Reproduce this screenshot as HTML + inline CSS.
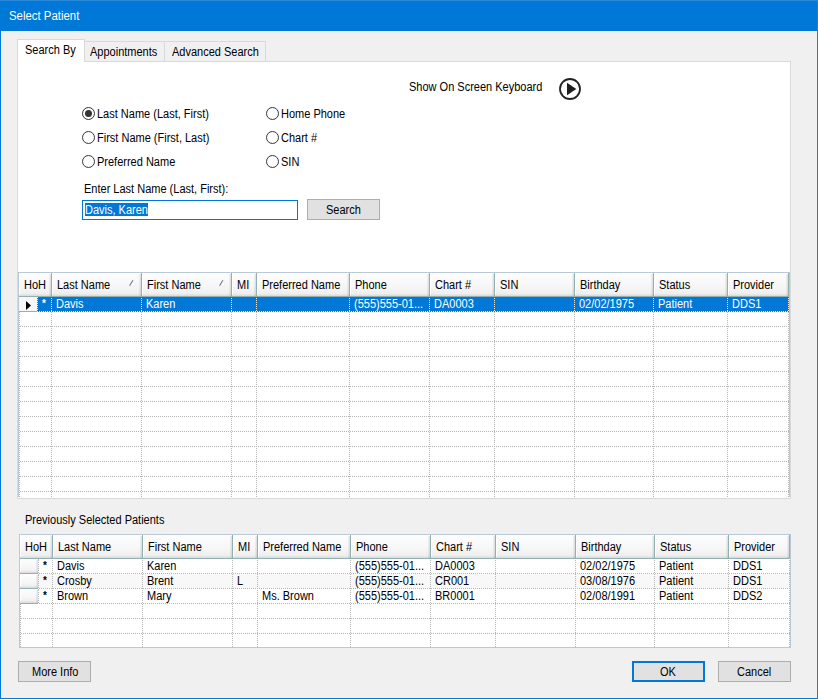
<!DOCTYPE html>
<html><head><meta charset="utf-8"><title>Select Patient</title>
<style>
html,body{margin:0;padding:0;}
body{width:818px;height:699px;position:relative;overflow:hidden;background:#f0f0f0;font-family:'Liberation Sans', sans-serif;}
.t{position:absolute;white-space:nowrap;line-height:13px;font-family:'Liberation Sans', sans-serif;transform-origin:0 0;}
svg{display:block}
</style></head><body>
<div style="position:absolute;left:0px;top:0px;width:818px;height:31px;background:#0078d7"></div>
<div style="position:absolute;left:0px;top:31px;width:1px;height:668px;background:#0078d7"></div>
<div style="position:absolute;left:817px;top:0px;width:1px;height:699px;background:#1a80d8"></div>
<div style="position:absolute;left:0px;top:0px;width:818px;height:1px;background:#2a87d9"></div>
<div style="position:absolute;left:0px;top:698px;width:818px;height:1px;background:#0078d7"></div>
<div class="t" style="left:9px;top:10px;color:#fff;font-size:12px;transform:scaleX(0.95);">Select Patient</div>
<div style="position:absolute;left:17px;top:61px;width:774px;height:438px;background:#fff;border:1px solid #d9d9d9;box-sizing:border-box"></div>
<div style="position:absolute;left:84px;top:41px;width:81px;height:21px;background:#f0f0f0;border:1px solid #d9d9d9;box-sizing:border-box"></div>
<div style="position:absolute;left:164px;top:41px;width:102px;height:21px;background:#f0f0f0;border:1px solid #d9d9d9;box-sizing:border-box"></div>
<div style="position:absolute;left:17px;top:39px;width:68px;height:23px;background:#fff;border:1px solid #d9d9d9;border-bottom:none;box-sizing:border-box"></div>
<div style="position:absolute;left:18px;top:61px;width:66px;height:1px;background:#fff"></div>
<div class="t" style="left:25px;top:44px;color:#000;font-size:12px;transform:scaleX(0.9167);">Search By</div>
<div class="t" style="left:90px;top:46px;color:#000;font-size:12px;transform:scaleX(0.9167);">Appointments</div>
<div class="t" style="left:172px;top:46px;color:#000;font-size:12px;transform:scaleX(0.9167);">Advanced Search</div>
<div class="t" style="left:409px;top:81px;color:#000;font-size:12px;transform:scaleX(0.9167);">Show On Screen Keyboard</div>
<svg style="position:absolute;left:558px;top:77px" width="24" height="24" viewBox="0 0 24 24">
<circle cx="12" cy="12" r="10" fill="none" stroke="#222" stroke-width="1.8"/>
<path d="M9 5.8 L18.3 12 L9 18.2 Z" fill="#1e1e1e"/></svg>
<svg style="position:absolute;left:82px;top:107px" width="13" height="13" viewBox="0 0 13 13"><circle cx="6.5" cy="6.5" r="6" fill="#fff" stroke="#333" stroke-width="1"/><circle cx="6.5" cy="6.5" r="3.5" fill="#333"/></svg>
<div class="t" style="left:97px;top:108px;color:#000;font-size:12px;transform:scaleX(0.9167);">Last Name (Last, First)</div>
<svg style="position:absolute;left:82px;top:131px" width="13" height="13" viewBox="0 0 13 13"><circle cx="6.5" cy="6.5" r="6" fill="#fff" stroke="#333" stroke-width="1"/></svg>
<div class="t" style="left:97px;top:132px;color:#000;font-size:12px;transform:scaleX(0.9167);">First Name (First, Last)</div>
<svg style="position:absolute;left:82px;top:155px" width="13" height="13" viewBox="0 0 13 13"><circle cx="6.5" cy="6.5" r="6" fill="#fff" stroke="#333" stroke-width="1"/></svg>
<div class="t" style="left:97px;top:156px;color:#000;font-size:12px;transform:scaleX(0.9167);">Preferred Name</div>
<svg style="position:absolute;left:266px;top:107px" width="13" height="13" viewBox="0 0 13 13"><circle cx="6.5" cy="6.5" r="6" fill="#fff" stroke="#333" stroke-width="1"/></svg>
<div class="t" style="left:281px;top:108px;color:#000;font-size:12px;transform:scaleX(0.9167);">Home Phone</div>
<svg style="position:absolute;left:266px;top:131px" width="13" height="13" viewBox="0 0 13 13"><circle cx="6.5" cy="6.5" r="6" fill="#fff" stroke="#333" stroke-width="1"/></svg>
<div class="t" style="left:281px;top:132px;color:#000;font-size:12px;transform:scaleX(0.9167);">Chart #</div>
<svg style="position:absolute;left:266px;top:155px" width="13" height="13" viewBox="0 0 13 13"><circle cx="6.5" cy="6.5" r="6" fill="#fff" stroke="#333" stroke-width="1"/></svg>
<div class="t" style="left:281px;top:156px;color:#000;font-size:12px;transform:scaleX(0.9167);">SIN</div>
<div class="t" style="left:84px;top:183px;color:#000;font-size:12px;transform:scaleX(0.9167);">Enter Last Name (Last, First):</div>
<div style="position:absolute;left:82px;top:200px;width:216px;height:20px;background:#fff;border:1px solid #0078d7;box-sizing:border-box"></div>
<div style="position:absolute;left:85px;top:203px;width:63px;height:13px;background:#0078d7"></div>
<div class="t" style="left:85px;top:204px;color:#fff;font-size:12px;transform:scaleX(0.9167);">Davis, Karen</div>
<div style="position:absolute;left:307px;top:199px;width:73px;height:21px;background:#e1e1e1;border:1px solid #adadad;box-sizing:border-box"></div>
<div class="t" style="left:326px;top:204px;color:#000;font-size:12px;transform:scaleX(0.9167);">Search</div>
<div style="position:absolute;left:18px;top:272px;width:772px;height:225px;background:#fff"></div>
<div style="position:absolute;left:18px;top:272px;width:772px;height:1px;background:#b9c9d8"></div>
<div style="position:absolute;left:18px;top:272px;width:1px;height:225px;background:#b9c9d8"></div>
<div style="position:absolute;left:789px;top:272px;width:1px;height:225px;background:#b9c9d8"></div>
<div style="position:absolute;left:19px;top:273px;width:32px;height:23px;background:linear-gradient(#fdfdfd,#f6f6f6 60%,#ececec)"></div>
<div style="position:absolute;left:19px;top:273px;width:1px;height:22px;background:#fff"></div>
<div style="position:absolute;left:49px;top:274px;width:2px;height:22px;background:linear-gradient(to right,rgba(0,0,0,0.03),rgba(0,0,0,0.12))"></div>
<div style="position:absolute;left:19px;top:294px;width:32px;height:2px;background:linear-gradient(rgba(0,0,0,0.02),rgba(0,0,0,0.08))"></div>
<div style="position:absolute;left:51px;top:273px;width:1px;height:23px;background:#92b0b0"></div>
<div class="t" style="left:24px;top:279px;color:#000;font-size:12px;transform:scaleX(0.9167);">HoH</div>
<div style="position:absolute;left:52px;top:273px;width:89px;height:23px;background:linear-gradient(#fdfdfd,#f6f6f6 60%,#ececec)"></div>
<div style="position:absolute;left:52px;top:273px;width:1px;height:22px;background:#fff"></div>
<div style="position:absolute;left:139px;top:274px;width:2px;height:22px;background:linear-gradient(to right,rgba(0,0,0,0.03),rgba(0,0,0,0.12))"></div>
<div style="position:absolute;left:52px;top:294px;width:89px;height:2px;background:linear-gradient(rgba(0,0,0,0.02),rgba(0,0,0,0.08))"></div>
<div style="position:absolute;left:141px;top:273px;width:1px;height:23px;background:#92b0b0"></div>
<div class="t" style="left:57px;top:279px;color:#000;font-size:12px;transform:scaleX(0.9167);">Last Name</div>
<svg style="position:absolute;left:128px;top:279px" width="10" height="8" viewBox="0 0 10 8"><path d="M1.5 7 L5 1 L8.5 7 Z" fill="#fbfbfb" stroke="#f0f0f0" stroke-width="1"/><path d="M1.6 6.8 L4.9 1.2" stroke="#7a7a7a" stroke-width="1.1"/></svg>
<div style="position:absolute;left:142px;top:273px;width:89px;height:23px;background:linear-gradient(#fdfdfd,#f6f6f6 60%,#ececec)"></div>
<div style="position:absolute;left:142px;top:273px;width:1px;height:22px;background:#fff"></div>
<div style="position:absolute;left:229px;top:274px;width:2px;height:22px;background:linear-gradient(to right,rgba(0,0,0,0.03),rgba(0,0,0,0.12))"></div>
<div style="position:absolute;left:142px;top:294px;width:89px;height:2px;background:linear-gradient(rgba(0,0,0,0.02),rgba(0,0,0,0.08))"></div>
<div style="position:absolute;left:231px;top:273px;width:1px;height:23px;background:#92b0b0"></div>
<div class="t" style="left:147px;top:279px;color:#000;font-size:12px;transform:scaleX(0.9167);">First Name</div>
<svg style="position:absolute;left:218px;top:279px" width="10" height="8" viewBox="0 0 10 8"><path d="M1.5 7 L5 1 L8.5 7 Z" fill="#fbfbfb" stroke="#f0f0f0" stroke-width="1"/><path d="M1.6 6.8 L4.9 1.2" stroke="#7a7a7a" stroke-width="1.1"/></svg>
<div style="position:absolute;left:232px;top:273px;width:24px;height:23px;background:linear-gradient(#fdfdfd,#f6f6f6 60%,#ececec)"></div>
<div style="position:absolute;left:232px;top:273px;width:1px;height:22px;background:#fff"></div>
<div style="position:absolute;left:254px;top:274px;width:2px;height:22px;background:linear-gradient(to right,rgba(0,0,0,0.03),rgba(0,0,0,0.12))"></div>
<div style="position:absolute;left:232px;top:294px;width:24px;height:2px;background:linear-gradient(rgba(0,0,0,0.02),rgba(0,0,0,0.08))"></div>
<div style="position:absolute;left:256px;top:273px;width:1px;height:23px;background:#92b0b0"></div>
<div class="t" style="left:237px;top:279px;color:#000;font-size:12px;transform:scaleX(0.9167);">MI</div>
<div style="position:absolute;left:257px;top:273px;width:92px;height:23px;background:linear-gradient(#fdfdfd,#f6f6f6 60%,#ececec)"></div>
<div style="position:absolute;left:257px;top:273px;width:1px;height:22px;background:#fff"></div>
<div style="position:absolute;left:347px;top:274px;width:2px;height:22px;background:linear-gradient(to right,rgba(0,0,0,0.03),rgba(0,0,0,0.12))"></div>
<div style="position:absolute;left:257px;top:294px;width:92px;height:2px;background:linear-gradient(rgba(0,0,0,0.02),rgba(0,0,0,0.08))"></div>
<div style="position:absolute;left:349px;top:273px;width:1px;height:23px;background:#92b0b0"></div>
<div class="t" style="left:262px;top:279px;color:#000;font-size:12px;transform:scaleX(0.9167);">Preferred Name</div>
<div style="position:absolute;left:350px;top:273px;width:79px;height:23px;background:linear-gradient(#fdfdfd,#f6f6f6 60%,#ececec)"></div>
<div style="position:absolute;left:350px;top:273px;width:1px;height:22px;background:#fff"></div>
<div style="position:absolute;left:427px;top:274px;width:2px;height:22px;background:linear-gradient(to right,rgba(0,0,0,0.03),rgba(0,0,0,0.12))"></div>
<div style="position:absolute;left:350px;top:294px;width:79px;height:2px;background:linear-gradient(rgba(0,0,0,0.02),rgba(0,0,0,0.08))"></div>
<div style="position:absolute;left:429px;top:273px;width:1px;height:23px;background:#92b0b0"></div>
<div class="t" style="left:355px;top:279px;color:#000;font-size:12px;transform:scaleX(0.9167);">Phone</div>
<div style="position:absolute;left:430px;top:273px;width:64px;height:23px;background:linear-gradient(#fdfdfd,#f6f6f6 60%,#ececec)"></div>
<div style="position:absolute;left:430px;top:273px;width:1px;height:22px;background:#fff"></div>
<div style="position:absolute;left:492px;top:274px;width:2px;height:22px;background:linear-gradient(to right,rgba(0,0,0,0.03),rgba(0,0,0,0.12))"></div>
<div style="position:absolute;left:430px;top:294px;width:64px;height:2px;background:linear-gradient(rgba(0,0,0,0.02),rgba(0,0,0,0.08))"></div>
<div style="position:absolute;left:494px;top:273px;width:1px;height:23px;background:#92b0b0"></div>
<div class="t" style="left:435px;top:279px;color:#000;font-size:12px;transform:scaleX(0.9167);">Chart #</div>
<div style="position:absolute;left:495px;top:273px;width:79px;height:23px;background:linear-gradient(#fdfdfd,#f6f6f6 60%,#ececec)"></div>
<div style="position:absolute;left:495px;top:273px;width:1px;height:22px;background:#fff"></div>
<div style="position:absolute;left:572px;top:274px;width:2px;height:22px;background:linear-gradient(to right,rgba(0,0,0,0.03),rgba(0,0,0,0.12))"></div>
<div style="position:absolute;left:495px;top:294px;width:79px;height:2px;background:linear-gradient(rgba(0,0,0,0.02),rgba(0,0,0,0.08))"></div>
<div style="position:absolute;left:574px;top:273px;width:1px;height:23px;background:#92b0b0"></div>
<div class="t" style="left:500px;top:279px;color:#000;font-size:12px;transform:scaleX(0.9167);">SIN</div>
<div style="position:absolute;left:575px;top:273px;width:78px;height:23px;background:linear-gradient(#fdfdfd,#f6f6f6 60%,#ececec)"></div>
<div style="position:absolute;left:575px;top:273px;width:1px;height:22px;background:#fff"></div>
<div style="position:absolute;left:651px;top:274px;width:2px;height:22px;background:linear-gradient(to right,rgba(0,0,0,0.03),rgba(0,0,0,0.12))"></div>
<div style="position:absolute;left:575px;top:294px;width:78px;height:2px;background:linear-gradient(rgba(0,0,0,0.02),rgba(0,0,0,0.08))"></div>
<div style="position:absolute;left:653px;top:273px;width:1px;height:23px;background:#92b0b0"></div>
<div class="t" style="left:580px;top:279px;color:#000;font-size:12px;transform:scaleX(0.9167);">Birthday</div>
<div style="position:absolute;left:654px;top:273px;width:73px;height:23px;background:linear-gradient(#fdfdfd,#f6f6f6 60%,#ececec)"></div>
<div style="position:absolute;left:654px;top:273px;width:1px;height:22px;background:#fff"></div>
<div style="position:absolute;left:725px;top:274px;width:2px;height:22px;background:linear-gradient(to right,rgba(0,0,0,0.03),rgba(0,0,0,0.12))"></div>
<div style="position:absolute;left:654px;top:294px;width:73px;height:2px;background:linear-gradient(rgba(0,0,0,0.02),rgba(0,0,0,0.08))"></div>
<div style="position:absolute;left:727px;top:273px;width:1px;height:23px;background:#92b0b0"></div>
<div class="t" style="left:659px;top:279px;color:#000;font-size:12px;transform:scaleX(0.9167);">Status</div>
<div style="position:absolute;left:728px;top:273px;width:60px;height:23px;background:linear-gradient(#fdfdfd,#f6f6f6 60%,#ececec)"></div>
<div style="position:absolute;left:728px;top:273px;width:1px;height:22px;background:#fff"></div>
<div style="position:absolute;left:786px;top:274px;width:2px;height:22px;background:linear-gradient(to right,rgba(0,0,0,0.03),rgba(0,0,0,0.12))"></div>
<div style="position:absolute;left:728px;top:294px;width:60px;height:2px;background:linear-gradient(rgba(0,0,0,0.02),rgba(0,0,0,0.08))"></div>
<div style="position:absolute;left:788px;top:273px;width:1px;height:23px;background:#92b0b0"></div>
<div class="t" style="left:733px;top:279px;color:#000;font-size:12px;transform:scaleX(0.9167);">Provider</div>
<div style="position:absolute;left:19px;top:296px;width:770px;height:1px;background:#92b0b0"></div>
<div style="position:absolute;left:19px;top:311px;width:770px;height:1px;background:repeating-linear-gradient(to right,#b4b4b4 0 1px,transparent 1px 2px);background-position:1px 0"></div>
<div style="position:absolute;left:19px;top:326px;width:770px;height:1px;background:repeating-linear-gradient(to right,#b4b4b4 0 1px,transparent 1px 2px);background-position:1px 0"></div>
<div style="position:absolute;left:19px;top:341px;width:770px;height:1px;background:repeating-linear-gradient(to right,#b4b4b4 0 1px,transparent 1px 2px);background-position:1px 0"></div>
<div style="position:absolute;left:19px;top:356px;width:770px;height:1px;background:repeating-linear-gradient(to right,#b4b4b4 0 1px,transparent 1px 2px);background-position:1px 0"></div>
<div style="position:absolute;left:19px;top:371px;width:770px;height:1px;background:repeating-linear-gradient(to right,#b4b4b4 0 1px,transparent 1px 2px);background-position:1px 0"></div>
<div style="position:absolute;left:19px;top:386px;width:770px;height:1px;background:repeating-linear-gradient(to right,#b4b4b4 0 1px,transparent 1px 2px);background-position:1px 0"></div>
<div style="position:absolute;left:19px;top:401px;width:770px;height:1px;background:repeating-linear-gradient(to right,#b4b4b4 0 1px,transparent 1px 2px);background-position:1px 0"></div>
<div style="position:absolute;left:19px;top:416px;width:770px;height:1px;background:repeating-linear-gradient(to right,#b4b4b4 0 1px,transparent 1px 2px);background-position:1px 0"></div>
<div style="position:absolute;left:19px;top:431px;width:770px;height:1px;background:repeating-linear-gradient(to right,#b4b4b4 0 1px,transparent 1px 2px);background-position:1px 0"></div>
<div style="position:absolute;left:19px;top:446px;width:770px;height:1px;background:repeating-linear-gradient(to right,#b4b4b4 0 1px,transparent 1px 2px);background-position:1px 0"></div>
<div style="position:absolute;left:19px;top:461px;width:770px;height:1px;background:repeating-linear-gradient(to right,#b4b4b4 0 1px,transparent 1px 2px);background-position:1px 0"></div>
<div style="position:absolute;left:19px;top:476px;width:770px;height:1px;background:repeating-linear-gradient(to right,#b4b4b4 0 1px,transparent 1px 2px);background-position:1px 0"></div>
<div style="position:absolute;left:19px;top:491px;width:770px;height:1px;background:repeating-linear-gradient(to right,#b4b4b4 0 1px,transparent 1px 2px);background-position:1px 0"></div>
<div style="position:absolute;left:19px;top:297px;width:1px;height:200px;background:repeating-linear-gradient(to bottom,#b4b4b4 0 1px,transparent 1px 2px);background-position:0 1px"></div>
<div style="position:absolute;left:51px;top:297px;width:1px;height:200px;background:repeating-linear-gradient(to bottom,#b4b4b4 0 1px,transparent 1px 2px);background-position:0 1px"></div>
<div style="position:absolute;left:141px;top:297px;width:1px;height:200px;background:repeating-linear-gradient(to bottom,#b4b4b4 0 1px,transparent 1px 2px);background-position:0 1px"></div>
<div style="position:absolute;left:231px;top:297px;width:1px;height:200px;background:repeating-linear-gradient(to bottom,#b4b4b4 0 1px,transparent 1px 2px);background-position:0 1px"></div>
<div style="position:absolute;left:256px;top:297px;width:1px;height:200px;background:repeating-linear-gradient(to bottom,#b4b4b4 0 1px,transparent 1px 2px);background-position:0 1px"></div>
<div style="position:absolute;left:349px;top:297px;width:1px;height:200px;background:repeating-linear-gradient(to bottom,#b4b4b4 0 1px,transparent 1px 2px);background-position:0 1px"></div>
<div style="position:absolute;left:429px;top:297px;width:1px;height:200px;background:repeating-linear-gradient(to bottom,#b4b4b4 0 1px,transparent 1px 2px);background-position:0 1px"></div>
<div style="position:absolute;left:494px;top:297px;width:1px;height:200px;background:repeating-linear-gradient(to bottom,#b4b4b4 0 1px,transparent 1px 2px);background-position:0 1px"></div>
<div style="position:absolute;left:574px;top:297px;width:1px;height:200px;background:repeating-linear-gradient(to bottom,#b4b4b4 0 1px,transparent 1px 2px);background-position:0 1px"></div>
<div style="position:absolute;left:653px;top:297px;width:1px;height:200px;background:repeating-linear-gradient(to bottom,#b4b4b4 0 1px,transparent 1px 2px);background-position:0 1px"></div>
<div style="position:absolute;left:727px;top:297px;width:1px;height:200px;background:repeating-linear-gradient(to bottom,#b4b4b4 0 1px,transparent 1px 2px);background-position:0 1px"></div>
<div style="position:absolute;left:788px;top:297px;width:1px;height:200px;background:repeating-linear-gradient(to bottom,#b4b4b4 0 1px,transparent 1px 2px);background-position:0 1px"></div>
<div style="position:absolute;left:37px;top:297px;width:752px;height:15px;background:#0078d7"></div>
<div style="position:absolute;left:19px;top:297px;width:18px;height:14px;background:#f7f7f7"></div>
<svg style="position:absolute;left:26px;top:301px" width="5" height="9" viewBox="0 0 5 9"><path d="M0 0 L5 4.5 L0 9 Z" fill="#000"/></svg>
<div style="position:absolute;left:37px;top:311px;width:752px;height:1px;background:repeating-linear-gradient(to right,#f4ece0 0 1px,transparent 1px 2px);background-position:0px 0"></div>
<div style="position:absolute;left:19px;top:311px;width:18px;height:1px;background:#92b0b0"></div>
<div style="position:absolute;left:37px;top:297px;width:1px;height:15px;background:repeating-linear-gradient(to bottom,#f4ece0 0 1px,transparent 1px 2px);background-position:0 0px"></div>
<div class="t" style="left:42px;top:297px;color:#fff;font-size:10px;font-weight:bold">*</div>
<div class="t" style="left:56px;top:298px;color:#fff;font-size:12px;transform:scaleX(0.9167);">Davis</div>
<div class="t" style="left:146px;top:298px;color:#fff;font-size:12px;transform:scaleX(0.9167);">Karen</div>
<div class="t" style="left:354px;top:298px;color:#fff;font-size:12px;transform:scaleX(0.9167);">(555)555-01...</div>
<div class="t" style="left:434px;top:298px;color:#fff;font-size:12px;transform:scaleX(0.9167);">DA0003</div>
<div class="t" style="left:579px;top:298px;color:#fff;font-size:12px;transform:scaleX(0.9167);">02/02/1975</div>
<div class="t" style="left:658px;top:298px;color:#fff;font-size:12px;transform:scaleX(0.9167);">Patient</div>
<div class="t" style="left:732px;top:298px;color:#fff;font-size:12px;transform:scaleX(0.9167);">DDS1</div>
<div style="position:absolute;left:51px;top:298px;width:1px;height:14px;background:repeating-linear-gradient(to bottom,#f4ece0 0 1px,transparent 1px 2px);background-position:0 0px"></div>
<div style="position:absolute;left:141px;top:298px;width:1px;height:14px;background:repeating-linear-gradient(to bottom,#f4ece0 0 1px,transparent 1px 2px);background-position:0 0px"></div>
<div style="position:absolute;left:231px;top:298px;width:1px;height:14px;background:repeating-linear-gradient(to bottom,#f4ece0 0 1px,transparent 1px 2px);background-position:0 0px"></div>
<div style="position:absolute;left:256px;top:298px;width:1px;height:14px;background:repeating-linear-gradient(to bottom,#f4ece0 0 1px,transparent 1px 2px);background-position:0 0px"></div>
<div style="position:absolute;left:349px;top:298px;width:1px;height:14px;background:repeating-linear-gradient(to bottom,#f4ece0 0 1px,transparent 1px 2px);background-position:0 0px"></div>
<div style="position:absolute;left:429px;top:298px;width:1px;height:14px;background:repeating-linear-gradient(to bottom,#f4ece0 0 1px,transparent 1px 2px);background-position:0 0px"></div>
<div style="position:absolute;left:494px;top:298px;width:1px;height:14px;background:repeating-linear-gradient(to bottom,#f4ece0 0 1px,transparent 1px 2px);background-position:0 0px"></div>
<div style="position:absolute;left:574px;top:298px;width:1px;height:14px;background:repeating-linear-gradient(to bottom,#f4ece0 0 1px,transparent 1px 2px);background-position:0 0px"></div>
<div style="position:absolute;left:653px;top:298px;width:1px;height:14px;background:repeating-linear-gradient(to bottom,#f4ece0 0 1px,transparent 1px 2px);background-position:0 0px"></div>
<div style="position:absolute;left:727px;top:298px;width:1px;height:14px;background:repeating-linear-gradient(to bottom,#f4ece0 0 1px,transparent 1px 2px);background-position:0 0px"></div>
<div style="position:absolute;left:788px;top:298px;width:1px;height:14px;background:repeating-linear-gradient(to bottom,#f4ece0 0 1px,transparent 1px 2px);background-position:0 0px"></div>
<div class="t" style="left:25px;top:514px;color:#000;font-size:12px;transform:scaleX(0.9167);">Previously Selected Patients</div>
<div style="position:absolute;left:19px;top:534px;width:772px;height:114px;background:#fff"></div>
<div style="position:absolute;left:19px;top:534px;width:772px;height:1px;background:#b9c9d8"></div>
<div style="position:absolute;left:19px;top:534px;width:1px;height:114px;background:#b9c9d8"></div>
<div style="position:absolute;left:790px;top:534px;width:1px;height:114px;background:#b9c9d8"></div>
<div style="position:absolute;left:19px;top:647px;width:772px;height:1px;background:#b9c9d8"></div>
<div style="position:absolute;left:20px;top:535px;width:32px;height:23px;background:linear-gradient(#fdfdfd,#f6f6f6 60%,#ececec)"></div>
<div style="position:absolute;left:20px;top:535px;width:1px;height:22px;background:#fff"></div>
<div style="position:absolute;left:50px;top:536px;width:2px;height:22px;background:linear-gradient(to right,rgba(0,0,0,0.03),rgba(0,0,0,0.12))"></div>
<div style="position:absolute;left:20px;top:556px;width:32px;height:2px;background:linear-gradient(rgba(0,0,0,0.02),rgba(0,0,0,0.08))"></div>
<div style="position:absolute;left:52px;top:535px;width:1px;height:23px;background:#92b0b0"></div>
<div class="t" style="left:25px;top:541px;color:#000;font-size:12px;transform:scaleX(0.9167);">HoH</div>
<div style="position:absolute;left:53px;top:535px;width:89px;height:23px;background:linear-gradient(#fdfdfd,#f6f6f6 60%,#ececec)"></div>
<div style="position:absolute;left:53px;top:535px;width:1px;height:22px;background:#fff"></div>
<div style="position:absolute;left:140px;top:536px;width:2px;height:22px;background:linear-gradient(to right,rgba(0,0,0,0.03),rgba(0,0,0,0.12))"></div>
<div style="position:absolute;left:53px;top:556px;width:89px;height:2px;background:linear-gradient(rgba(0,0,0,0.02),rgba(0,0,0,0.08))"></div>
<div style="position:absolute;left:142px;top:535px;width:1px;height:23px;background:#92b0b0"></div>
<div class="t" style="left:58px;top:541px;color:#000;font-size:12px;transform:scaleX(0.9167);">Last Name</div>
<div style="position:absolute;left:143px;top:535px;width:89px;height:23px;background:linear-gradient(#fdfdfd,#f6f6f6 60%,#ececec)"></div>
<div style="position:absolute;left:143px;top:535px;width:1px;height:22px;background:#fff"></div>
<div style="position:absolute;left:230px;top:536px;width:2px;height:22px;background:linear-gradient(to right,rgba(0,0,0,0.03),rgba(0,0,0,0.12))"></div>
<div style="position:absolute;left:143px;top:556px;width:89px;height:2px;background:linear-gradient(rgba(0,0,0,0.02),rgba(0,0,0,0.08))"></div>
<div style="position:absolute;left:232px;top:535px;width:1px;height:23px;background:#92b0b0"></div>
<div class="t" style="left:148px;top:541px;color:#000;font-size:12px;transform:scaleX(0.9167);">First Name</div>
<div style="position:absolute;left:233px;top:535px;width:24px;height:23px;background:linear-gradient(#fdfdfd,#f6f6f6 60%,#ececec)"></div>
<div style="position:absolute;left:233px;top:535px;width:1px;height:22px;background:#fff"></div>
<div style="position:absolute;left:255px;top:536px;width:2px;height:22px;background:linear-gradient(to right,rgba(0,0,0,0.03),rgba(0,0,0,0.12))"></div>
<div style="position:absolute;left:233px;top:556px;width:24px;height:2px;background:linear-gradient(rgba(0,0,0,0.02),rgba(0,0,0,0.08))"></div>
<div style="position:absolute;left:257px;top:535px;width:1px;height:23px;background:#92b0b0"></div>
<div class="t" style="left:238px;top:541px;color:#000;font-size:12px;transform:scaleX(0.9167);">MI</div>
<div style="position:absolute;left:258px;top:535px;width:92px;height:23px;background:linear-gradient(#fdfdfd,#f6f6f6 60%,#ececec)"></div>
<div style="position:absolute;left:258px;top:535px;width:1px;height:22px;background:#fff"></div>
<div style="position:absolute;left:348px;top:536px;width:2px;height:22px;background:linear-gradient(to right,rgba(0,0,0,0.03),rgba(0,0,0,0.12))"></div>
<div style="position:absolute;left:258px;top:556px;width:92px;height:2px;background:linear-gradient(rgba(0,0,0,0.02),rgba(0,0,0,0.08))"></div>
<div style="position:absolute;left:350px;top:535px;width:1px;height:23px;background:#92b0b0"></div>
<div class="t" style="left:263px;top:541px;color:#000;font-size:12px;transform:scaleX(0.9167);">Preferred Name</div>
<div style="position:absolute;left:351px;top:535px;width:79px;height:23px;background:linear-gradient(#fdfdfd,#f6f6f6 60%,#ececec)"></div>
<div style="position:absolute;left:351px;top:535px;width:1px;height:22px;background:#fff"></div>
<div style="position:absolute;left:428px;top:536px;width:2px;height:22px;background:linear-gradient(to right,rgba(0,0,0,0.03),rgba(0,0,0,0.12))"></div>
<div style="position:absolute;left:351px;top:556px;width:79px;height:2px;background:linear-gradient(rgba(0,0,0,0.02),rgba(0,0,0,0.08))"></div>
<div style="position:absolute;left:430px;top:535px;width:1px;height:23px;background:#92b0b0"></div>
<div class="t" style="left:356px;top:541px;color:#000;font-size:12px;transform:scaleX(0.9167);">Phone</div>
<div style="position:absolute;left:431px;top:535px;width:64px;height:23px;background:linear-gradient(#fdfdfd,#f6f6f6 60%,#ececec)"></div>
<div style="position:absolute;left:431px;top:535px;width:1px;height:22px;background:#fff"></div>
<div style="position:absolute;left:493px;top:536px;width:2px;height:22px;background:linear-gradient(to right,rgba(0,0,0,0.03),rgba(0,0,0,0.12))"></div>
<div style="position:absolute;left:431px;top:556px;width:64px;height:2px;background:linear-gradient(rgba(0,0,0,0.02),rgba(0,0,0,0.08))"></div>
<div style="position:absolute;left:495px;top:535px;width:1px;height:23px;background:#92b0b0"></div>
<div class="t" style="left:436px;top:541px;color:#000;font-size:12px;transform:scaleX(0.9167);">Chart #</div>
<div style="position:absolute;left:496px;top:535px;width:79px;height:23px;background:linear-gradient(#fdfdfd,#f6f6f6 60%,#ececec)"></div>
<div style="position:absolute;left:496px;top:535px;width:1px;height:22px;background:#fff"></div>
<div style="position:absolute;left:573px;top:536px;width:2px;height:22px;background:linear-gradient(to right,rgba(0,0,0,0.03),rgba(0,0,0,0.12))"></div>
<div style="position:absolute;left:496px;top:556px;width:79px;height:2px;background:linear-gradient(rgba(0,0,0,0.02),rgba(0,0,0,0.08))"></div>
<div style="position:absolute;left:575px;top:535px;width:1px;height:23px;background:#92b0b0"></div>
<div class="t" style="left:501px;top:541px;color:#000;font-size:12px;transform:scaleX(0.9167);">SIN</div>
<div style="position:absolute;left:576px;top:535px;width:78px;height:23px;background:linear-gradient(#fdfdfd,#f6f6f6 60%,#ececec)"></div>
<div style="position:absolute;left:576px;top:535px;width:1px;height:22px;background:#fff"></div>
<div style="position:absolute;left:652px;top:536px;width:2px;height:22px;background:linear-gradient(to right,rgba(0,0,0,0.03),rgba(0,0,0,0.12))"></div>
<div style="position:absolute;left:576px;top:556px;width:78px;height:2px;background:linear-gradient(rgba(0,0,0,0.02),rgba(0,0,0,0.08))"></div>
<div style="position:absolute;left:654px;top:535px;width:1px;height:23px;background:#92b0b0"></div>
<div class="t" style="left:581px;top:541px;color:#000;font-size:12px;transform:scaleX(0.9167);">Birthday</div>
<div style="position:absolute;left:655px;top:535px;width:73px;height:23px;background:linear-gradient(#fdfdfd,#f6f6f6 60%,#ececec)"></div>
<div style="position:absolute;left:655px;top:535px;width:1px;height:22px;background:#fff"></div>
<div style="position:absolute;left:726px;top:536px;width:2px;height:22px;background:linear-gradient(to right,rgba(0,0,0,0.03),rgba(0,0,0,0.12))"></div>
<div style="position:absolute;left:655px;top:556px;width:73px;height:2px;background:linear-gradient(rgba(0,0,0,0.02),rgba(0,0,0,0.08))"></div>
<div style="position:absolute;left:728px;top:535px;width:1px;height:23px;background:#92b0b0"></div>
<div class="t" style="left:660px;top:541px;color:#000;font-size:12px;transform:scaleX(0.9167);">Status</div>
<div style="position:absolute;left:729px;top:535px;width:60px;height:23px;background:linear-gradient(#fdfdfd,#f6f6f6 60%,#ececec)"></div>
<div style="position:absolute;left:729px;top:535px;width:1px;height:22px;background:#fff"></div>
<div style="position:absolute;left:787px;top:536px;width:2px;height:22px;background:linear-gradient(to right,rgba(0,0,0,0.03),rgba(0,0,0,0.12))"></div>
<div style="position:absolute;left:729px;top:556px;width:60px;height:2px;background:linear-gradient(rgba(0,0,0,0.02),rgba(0,0,0,0.08))"></div>
<div style="position:absolute;left:789px;top:535px;width:1px;height:23px;background:#92b0b0"></div>
<div class="t" style="left:734px;top:541px;color:#000;font-size:12px;transform:scaleX(0.9167);">Provider</div>
<div style="position:absolute;left:20px;top:558px;width:770px;height:1px;background:#92b0b0"></div>
<div style="position:absolute;left:38px;top:574px;width:752px;height:14px;background:#f8f8f8"></div>
<div style="position:absolute;left:20px;top:573px;width:770px;height:1px;background:repeating-linear-gradient(to right,#b4b4b4 0 1px,transparent 1px 2px);background-position:1px 0"></div>
<div style="position:absolute;left:20px;top:588px;width:770px;height:1px;background:repeating-linear-gradient(to right,#b4b4b4 0 1px,transparent 1px 2px);background-position:1px 0"></div>
<div style="position:absolute;left:20px;top:603px;width:770px;height:1px;background:repeating-linear-gradient(to right,#b4b4b4 0 1px,transparent 1px 2px);background-position:1px 0"></div>
<div style="position:absolute;left:20px;top:618px;width:770px;height:1px;background:repeating-linear-gradient(to right,#b4b4b4 0 1px,transparent 1px 2px);background-position:1px 0"></div>
<div style="position:absolute;left:20px;top:633px;width:770px;height:1px;background:repeating-linear-gradient(to right,#b4b4b4 0 1px,transparent 1px 2px);background-position:1px 0"></div>
<div style="position:absolute;left:20px;top:559px;width:1px;height:88px;background:repeating-linear-gradient(to bottom,#b4b4b4 0 1px,transparent 1px 2px);background-position:0 1px"></div>
<div style="position:absolute;left:52px;top:559px;width:1px;height:88px;background:repeating-linear-gradient(to bottom,#b4b4b4 0 1px,transparent 1px 2px);background-position:0 1px"></div>
<div style="position:absolute;left:142px;top:559px;width:1px;height:88px;background:repeating-linear-gradient(to bottom,#b4b4b4 0 1px,transparent 1px 2px);background-position:0 1px"></div>
<div style="position:absolute;left:232px;top:559px;width:1px;height:88px;background:repeating-linear-gradient(to bottom,#b4b4b4 0 1px,transparent 1px 2px);background-position:0 1px"></div>
<div style="position:absolute;left:257px;top:559px;width:1px;height:88px;background:repeating-linear-gradient(to bottom,#b4b4b4 0 1px,transparent 1px 2px);background-position:0 1px"></div>
<div style="position:absolute;left:350px;top:559px;width:1px;height:88px;background:repeating-linear-gradient(to bottom,#b4b4b4 0 1px,transparent 1px 2px);background-position:0 1px"></div>
<div style="position:absolute;left:430px;top:559px;width:1px;height:88px;background:repeating-linear-gradient(to bottom,#b4b4b4 0 1px,transparent 1px 2px);background-position:0 1px"></div>
<div style="position:absolute;left:495px;top:559px;width:1px;height:88px;background:repeating-linear-gradient(to bottom,#b4b4b4 0 1px,transparent 1px 2px);background-position:0 1px"></div>
<div style="position:absolute;left:575px;top:559px;width:1px;height:88px;background:repeating-linear-gradient(to bottom,#b4b4b4 0 1px,transparent 1px 2px);background-position:0 1px"></div>
<div style="position:absolute;left:654px;top:559px;width:1px;height:88px;background:repeating-linear-gradient(to bottom,#b4b4b4 0 1px,transparent 1px 2px);background-position:0 1px"></div>
<div style="position:absolute;left:728px;top:559px;width:1px;height:88px;background:repeating-linear-gradient(to bottom,#b4b4b4 0 1px,transparent 1px 2px);background-position:0 1px"></div>
<div style="position:absolute;left:789px;top:559px;width:1px;height:88px;background:repeating-linear-gradient(to bottom,#b4b4b4 0 1px,transparent 1px 2px);background-position:0 1px"></div>
<div style="position:absolute;left:20px;top:559px;width:18px;height:14px;background:linear-gradient(#fdfdfd,#f6f6f6 60%,#ececec)"></div>
<div style="position:absolute;left:20px;top:559px;width:1px;height:13px;background:#fff"></div>
<div style="position:absolute;left:36px;top:560px;width:2px;height:13px;background:linear-gradient(to right,rgba(0,0,0,0.03),rgba(0,0,0,0.12))"></div>
<div style="position:absolute;left:20px;top:571px;width:18px;height:2px;background:linear-gradient(rgba(0,0,0,0.02),rgba(0,0,0,0.08))"></div>
<div style="position:absolute;left:20px;top:573px;width:18px;height:1px;background:#92b0b0"></div>
<div style="position:absolute;left:38px;top:559px;width:1px;height:15px;background:repeating-linear-gradient(to bottom,#b4b4b4 0 1px,transparent 1px 2px);background-position:0 1px"></div>
<div class="t" style="left:43px;top:559px;color:#000;font-size:10px;font-weight:bold">*</div>
<div class="t" style="left:57px;top:560px;color:#000;font-size:12px;transform:scaleX(0.9167);">Davis</div>
<div class="t" style="left:147px;top:560px;color:#000;font-size:12px;transform:scaleX(0.9167);">Karen</div>
<div class="t" style="left:355px;top:560px;color:#000;font-size:12px;transform:scaleX(0.9167);">(555)555-01...</div>
<div class="t" style="left:435px;top:560px;color:#000;font-size:12px;transform:scaleX(0.9167);">DA0003</div>
<div class="t" style="left:580px;top:560px;color:#000;font-size:12px;transform:scaleX(0.9167);">02/02/1975</div>
<div class="t" style="left:659px;top:560px;color:#000;font-size:12px;transform:scaleX(0.9167);">Patient</div>
<div class="t" style="left:733px;top:560px;color:#000;font-size:12px;transform:scaleX(0.9167);">DDS1</div>
<div style="position:absolute;left:20px;top:574px;width:18px;height:14px;background:linear-gradient(#fdfdfd,#f6f6f6 60%,#ececec)"></div>
<div style="position:absolute;left:20px;top:574px;width:1px;height:13px;background:#fff"></div>
<div style="position:absolute;left:36px;top:575px;width:2px;height:13px;background:linear-gradient(to right,rgba(0,0,0,0.03),rgba(0,0,0,0.12))"></div>
<div style="position:absolute;left:20px;top:586px;width:18px;height:2px;background:linear-gradient(rgba(0,0,0,0.02),rgba(0,0,0,0.08))"></div>
<div style="position:absolute;left:20px;top:588px;width:18px;height:1px;background:#92b0b0"></div>
<div style="position:absolute;left:38px;top:574px;width:1px;height:15px;background:repeating-linear-gradient(to bottom,#b4b4b4 0 1px,transparent 1px 2px);background-position:0 1px"></div>
<div class="t" style="left:43px;top:574px;color:#000;font-size:10px;font-weight:bold">*</div>
<div class="t" style="left:57px;top:575px;color:#000;font-size:12px;transform:scaleX(0.9167);">Crosby</div>
<div class="t" style="left:147px;top:575px;color:#000;font-size:12px;transform:scaleX(0.9167);">Brent</div>
<div class="t" style="left:237px;top:575px;color:#000;font-size:12px;transform:scaleX(0.9167);">L</div>
<div class="t" style="left:355px;top:575px;color:#000;font-size:12px;transform:scaleX(0.9167);">(555)555-01...</div>
<div class="t" style="left:435px;top:575px;color:#000;font-size:12px;transform:scaleX(0.9167);">CR001</div>
<div class="t" style="left:580px;top:575px;color:#000;font-size:12px;transform:scaleX(0.9167);">03/08/1976</div>
<div class="t" style="left:659px;top:575px;color:#000;font-size:12px;transform:scaleX(0.9167);">Patient</div>
<div class="t" style="left:733px;top:575px;color:#000;font-size:12px;transform:scaleX(0.9167);">DDS1</div>
<div style="position:absolute;left:20px;top:589px;width:18px;height:14px;background:linear-gradient(#fdfdfd,#f6f6f6 60%,#ececec)"></div>
<div style="position:absolute;left:20px;top:589px;width:1px;height:13px;background:#fff"></div>
<div style="position:absolute;left:36px;top:590px;width:2px;height:13px;background:linear-gradient(to right,rgba(0,0,0,0.03),rgba(0,0,0,0.12))"></div>
<div style="position:absolute;left:20px;top:601px;width:18px;height:2px;background:linear-gradient(rgba(0,0,0,0.02),rgba(0,0,0,0.08))"></div>
<div style="position:absolute;left:20px;top:603px;width:18px;height:1px;background:#92b0b0"></div>
<div style="position:absolute;left:38px;top:589px;width:1px;height:15px;background:repeating-linear-gradient(to bottom,#b4b4b4 0 1px,transparent 1px 2px);background-position:0 1px"></div>
<div class="t" style="left:43px;top:589px;color:#000;font-size:10px;font-weight:bold">*</div>
<div class="t" style="left:57px;top:590px;color:#000;font-size:12px;transform:scaleX(0.9167);">Brown</div>
<div class="t" style="left:147px;top:590px;color:#000;font-size:12px;transform:scaleX(0.9167);">Mary</div>
<div class="t" style="left:262px;top:590px;color:#000;font-size:12px;transform:scaleX(0.9167);">Ms. Brown</div>
<div class="t" style="left:355px;top:590px;color:#000;font-size:12px;transform:scaleX(0.9167);">(555)555-01...</div>
<div class="t" style="left:435px;top:590px;color:#000;font-size:12px;transform:scaleX(0.9167);">BR0001</div>
<div class="t" style="left:580px;top:590px;color:#000;font-size:12px;transform:scaleX(0.9167);">02/08/1991</div>
<div class="t" style="left:659px;top:590px;color:#000;font-size:12px;transform:scaleX(0.9167);">Patient</div>
<div class="t" style="left:733px;top:590px;color:#000;font-size:12px;transform:scaleX(0.9167);">DDS2</div>
<div style="position:absolute;left:18px;top:661px;width:73px;height:21px;background:#e1e1e1;border:1px solid #adadad;box-sizing:border-box"></div>
<div class="t" style="left:32px;top:666px;color:#000;font-size:12px;transform:scaleX(0.9167);">More Info</div>
<div style="position:absolute;left:632px;top:661px;width:73px;height:21px;background:#e1e1e1;border:2px solid #0078d7;box-sizing:border-box"></div>
<div class="t" style="left:660px;top:666px;color:#000;font-size:12px;transform:scaleX(0.9167);">OK</div>
<div style="position:absolute;left:718px;top:661px;width:73px;height:21px;background:#e1e1e1;border:1px solid #adadad;box-sizing:border-box"></div>
<div class="t" style="left:737px;top:666px;color:#000;font-size:12px;transform:scaleX(0.9167);">Cancel</div>
</body></html>
